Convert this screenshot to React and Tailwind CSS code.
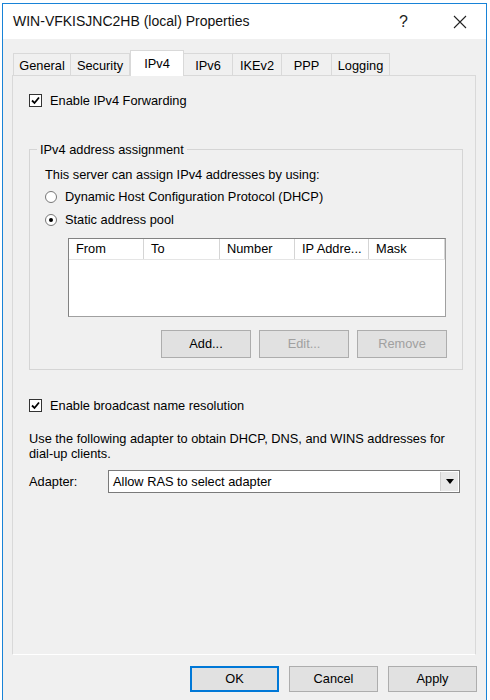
import React from "react";

const font = { fontFamily: '"Liberation Sans", Arial, sans-serif' };

const tabs = [
  { label: "General", w: "w-[58px]" },
  { label: "Security", w: "w-[60px]" },
  { label: "IPv4", w: "w-[54px]", active: true },
  { label: "IPv6", w: "w-[50px]" },
  { label: "IKEv2", w: "w-[50px]" },
  { label: "PPP", w: "w-[51px]" },
  { label: "Logging", w: "w-[59px]" },
];

const columns = [
  { label: "From", w: "w-[75px]" },
  { label: "To", w: "w-[76px]" },
  { label: "Number", w: "w-[75px]" },
  { label: "IP Addre...", w: "w-[74px]" },
  { label: "Mask", w: "w-[76px]" },
];

const CheckBox = ({ checked }) => (
  <div className="w-[13px] h-[13px] border border-[#333] bg-white flex items-center justify-center shrink-0">
    {checked && (
      <svg width="9" height="9" viewBox="0 0 9 9">
        <path d="M1 4.5 L3.5 7 L8 1.5" fill="none" stroke="#000" strokeWidth="1.8" />
      </svg>
    )}
  </div>
);

const Radio = ({ checked }) => (
  <div className="w-[12px] h-[12px] rounded-full border border-[#777] bg-white flex items-center justify-center shrink-0">
    {checked && <div className="w-[4px] h-[4px] rounded-full bg-black" />}
  </div>
);

const Button = ({ children, disabled, primary, w = "w-[90px]", h = "h-[28px]" }) => (
  <div
    className={`${w} ${h} flex items-center justify-center bg-[#e1e1e1] ${
      primary ? "border-2 border-[#0078d7]" : "border border-[#adadad]"
    } ${disabled ? "text-[#a0a0a0]" : "text-black"}`}
  >
    {children}
  </div>
);

export default function App() {
  return (
    <div className="w-[490px] h-[700px] bg-white overflow-hidden text-[12.8px] text-black" style={font}>
      <div className="ml-[2px] mt-[3px] w-[485px] h-[697px] border-l border-t border-r border-[#1883d7] flex flex-col">
        {/* title bar */}
        <div className="h-[35px] bg-white flex items-center shrink-0">
          <span className="pl-[10px] text-[14px] text-[#111]">WIN-VFKISJNC2HB (local) Properties</span>
          <span className="ml-auto text-[16px] text-[#222] mr-[45px]">?</span>
          <svg className="mr-[19px]" width="14" height="14" viewBox="0 0 14 14">
            <path d="M1 1 L13 13 M13 1 L1 13" stroke="#222" strokeWidth="1.1" />
          </svg>
        </div>

        {/* body */}
        <div className="flex-1 bg-[#f0f0f0] px-[9px] pt-[11px]">
          {/* tabs */}
          <div className="flex items-end h-[25px] pl-[1px] relative z-10">
            {tabs.map((t) =>
              t.active ? (
                <div
                  key={t.label}
                  className={`${t.w} h-[26px] -mb-px bg-white border border-b-0 border-[#d9d9d9] flex items-start justify-center pt-[3px]`}
                >
                  {t.label}
                </div>
              ) : (
                <div
                  key={t.label}
                  className={`${t.w} h-[22px] bg-[#f0f0f0] border border-b-0 border-[#d9d9d9] flex items-center justify-center pt-[2px] -ml-px first:ml-0`}
                >
                  {t.label}
                </div>
              )
            )}
          </div>

          {/* panel */}
          <div className="w-[464px] h-[580px] border border-[#d9d9d9] border-b-white bg-[#f0f0f0] pl-[16px] pt-[17px]">
            <div className="flex items-center gap-[8px] h-[15px]">
              <CheckBox checked />
              <span>Enable IPv4 Forwarding</span>
            </div>

            {/* group box */}
            <fieldset className="mt-[34px] w-[432px] border border-[#d5d5d5] px-[15px] pb-[11px]">
              <legend className="-ml-[8px] px-[3px] leading-[15px]">IPv4 address assignment</legend>
              <div className="mt-[10px] h-[15px] leading-[15px]">This server can assign IPv4 addresses by using:</div>
              <div className="mt-[7px] flex items-center gap-[8px] h-[15px]">
                <Radio />
                <span>Dynamic Host Configuration Protocol (DHCP)</span>
              </div>
              <div className="mt-[8px] flex items-center gap-[8px] h-[15px]">
                <Radio checked />
                <span>Static address pool</span>
              </div>

              {/* list view */}
              <div className="mt-[11px] ml-[23px] w-[378px] h-[79px] border border-[#a0a0a0] border-t-[#828282] border-l-[#828282] bg-white">
                <div className="flex h-[21px] border-b border-[#e5e5e5]">
                  {columns.map((c) => (
                    <div
                      key={c.label}
                      className={`${c.w} h-full border-r border-[#d5d5d5] pl-[7px] flex items-center`}
                    >
                      {c.label}
                    </div>
                  ))}
                </div>
              </div>

              <div className="mt-[13px] ml-[116px] flex gap-[8px]">
                <Button>Add...</Button>
                <Button disabled>Edit...</Button>
                <Button disabled>Remove</Button>
              </div>
            </fieldset>

            <div className="mt-[28px] flex items-center gap-[8px] h-[15px]">
              <CheckBox checked />
              <span>Enable broadcast name resolution</span>
            </div>

            <div className="mt-[18px] leading-[15px] w-[440px]">
              Use the following adapter to obtain DHCP, DNS, and WINS addresses for
              <br />
              dial-up clients.
            </div>

            <div className="mt-[9px] flex items-center">
              <span className="w-[79px]">Adapter:</span>
              <div className="w-[352px] h-[23px] border border-[#7a7a7a] bg-white flex items-center">
                <span className="pl-[4px]">Allow RAS to select adapter</span>
                <div className="ml-auto w-[18px] h-[19px] mr-[1px] bg-[#e8e8e8] border-l border-[#d0d0d0] flex items-center justify-center">
                  <svg width="8" height="5" viewBox="0 0 8 5">
                    <path d="M0 0 L8 0 L4 5 Z" fill="#000" />
                  </svg>
                </div>
              </div>
            </div>
          </div>

          {/* dialog buttons */}
          <div className="mt-[11px] flex justify-end gap-[10px]">
            <Button primary w="w-[89px]" h="h-[26px]">OK</Button>
            <Button w="w-[89px]" h="h-[26px]">Cancel</Button>
            <Button w="w-[89px]" h="h-[26px]">Apply</Button>
          </div>
        </div>
      </div>
    </div>
  );
}
